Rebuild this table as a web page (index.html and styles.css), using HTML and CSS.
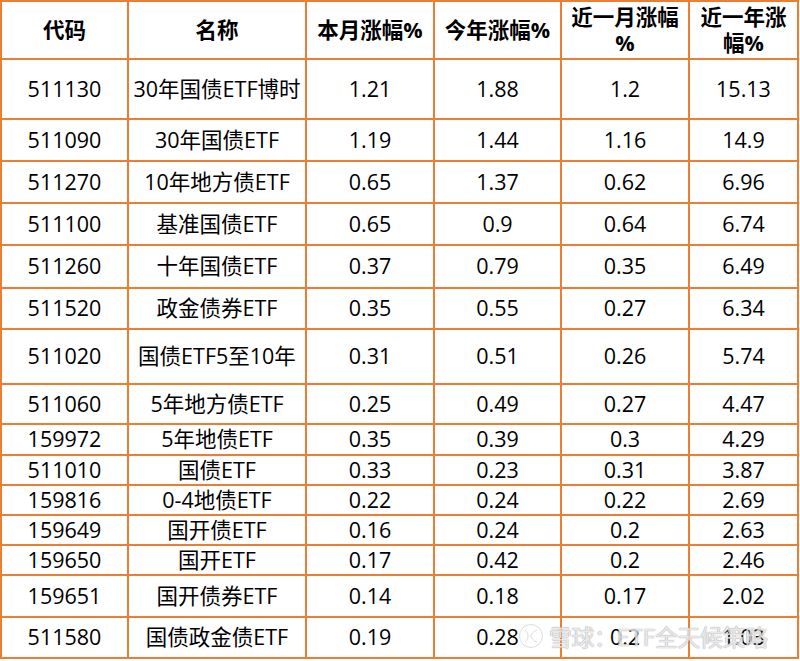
FILE: index.html
```html
<!DOCTYPE html>
<html lang="zh-CN">
<head>
<meta charset="utf-8">
<title>债券ETF涨幅</title>
<link rel="stylesheet" href="styles.css">
</head>
<body>
<div class="page">
<table class="etf">
<colgroup>
<col class="c1"><col class="c2"><col class="c3"><col class="c4"><col class="c5"><col class="c6">
</colgroup>
<thead>
<tr class="h56"><th>代码</th><th>名称</th><th>本月涨幅%</th><th>今年涨幅%</th><th>近一月涨幅<br>%</th><th>近一年涨<br>幅%</th></tr>
</thead>
<tbody>
<tr class="h58"><td>511130</td><td>30年国债ETF博时</td><td>1.21</td><td>1.88</td><td>1.2</td><td>15.13</td></tr>
<tr class="h40"><td>511090</td><td>30年国债ETF</td><td>1.19</td><td>1.44</td><td>1.16</td><td>14.9</td></tr>
<tr class="h40"><td>511270</td><td>10年地方债ETF</td><td>0.65</td><td>1.37</td><td>0.62</td><td>6.96</td></tr>
<tr class="h40"><td>511100</td><td>基准国债ETF</td><td>0.65</td><td>0.9</td><td>0.64</td><td>6.74</td></tr>
<tr class="h41"><td>511260</td><td>十年国债ETF</td><td>0.37</td><td>0.79</td><td>0.35</td><td>6.49</td></tr>
<tr class="h39"><td>511520</td><td>政金债券ETF</td><td>0.35</td><td>0.55</td><td>0.27</td><td>6.34</td></tr>
<tr class="h53"><td>511020</td><td>国债ETF5至10年</td><td>0.31</td><td>0.51</td><td>0.26</td><td>5.74</td></tr>
<tr class="h38"><td>511060</td><td>5年地方债ETF</td><td>0.25</td><td>0.49</td><td>0.27</td><td>4.47</td></tr>
<tr class="h29"><td>159972</td><td>5年地债ETF</td><td>0.35</td><td>0.39</td><td>0.3</td><td>4.29</td></tr>
<tr class="h28"><td>511010</td><td>国债ETF</td><td>0.33</td><td>0.23</td><td>0.31</td><td>3.87</td></tr>
<tr class="h28"><td>159816</td><td>0-4地债ETF</td><td>0.22</td><td>0.24</td><td>0.22</td><td>2.69</td></tr>
<tr class="h28"><td>159649</td><td>国开债ETF</td><td>0.16</td><td>0.24</td><td>0.2</td><td>2.63</td></tr>
<tr class="h28"><td>159650</td><td>国开ETF</td><td>0.17</td><td>0.42</td><td>0.2</td><td>2.46</td></tr>
<tr class="h40"><td>159651</td><td>国开债券ETF</td><td>0.14</td><td>0.18</td><td>0.17</td><td>2.02</td></tr>
<tr class="h39"><td>511580</td><td>国债政金债ETF</td><td>0.19</td><td>0.28</td><td>0.2</td><td>1.03</td></tr>
</tbody>
</table>
<div class="watermark">
<svg class="wm-logo" width="26" height="26" viewBox="0 0 26 26" aria-hidden="true">
<circle cx="13" cy="13" r="11.5" fill="none" stroke="#fff" stroke-width="2.2"/>
<circle cx="13" cy="13" r="11.5" fill="none" stroke="#bdbdbd" stroke-width="0.6"/>
<path d="M7 7 C11 10 11 16 7 19" fill="none" stroke="#fff" stroke-width="2.4" stroke-linecap="round"/>
<path d="M7 7 C11 10 11 16 7 19" fill="none" stroke="#bdbdbd" stroke-width="0.6"/>
<path d="M19 7 C14 9 12 13 13 14 C14 16 16 18 19 19" fill="none" stroke="#fff" stroke-width="2.4" stroke-linecap="round"/>
<path d="M19 7 C14 9 12 13 13 14 C14 16 16 18 19 19" fill="none" stroke="#bdbdbd" stroke-width="0.6"/>
</svg>
<span class="wm-text">雪球：ETF全天候策略</span>
</div>
</div>
</body>
</html>
```
FILE: styles.css
```css
html, body {
  margin: 0;
  padding: 0;
  background: #ffffff;
}

.page {
  position: relative;
  width: 800px;
  height: 661px;
  overflow: hidden;
}

.etf {
  table-layout: fixed;
  width: 799px;
  border-collapse: separate;
  border-spacing: 2px;
  background: #ed7d31;
  font-family: "Open Sans", "Noto Sans CJK SC", sans-serif;
  font-size: 21.5px;
  color: #000;
}

.c1 { width: 125px; }
.c2 { width: 176px; }
.c3 { width: 126px; }
.c4 { width: 125px; }
.c5 { width: 126px; }
.c6 { width: 107px; }

.etf th,
.etf td {
  background: #ffffff;
  padding: 0;
  text-align: center;
  vertical-align: middle;
  line-height: 1.25;
}

.etf th {
  font-weight: 700;
  line-height: 1.22;
  white-space: nowrap;
}

.etf td {
  font-weight: 400;
  white-space: nowrap;
}

.h56 > * { height: 56px; }
.h58 > * { height: 58px; }
.h53 > * { height: 53px; }
.h41 > * { height: 41px; }
.h40 > * { height: 40px; }
.h39 > * { height: 39px; }
.h38 > * { height: 38px; }
.h29 > * { height: 29px; }
.h28 > * { height: 28px; }

.watermark {
  position: absolute;
  left: 518px;
  top: 623px;
  display: flex;
  align-items: center;
  gap: 5px;
  pointer-events: none;
  opacity: 0.85;
}

.wm-logo {
  display: block;
}

.wm-text {
  font-family: "Noto Sans CJK SC", sans-serif;
  font-size: 23px;
  line-height: 26px;
  color: rgba(255, 255, 255, 0.75);
  text-shadow: 0 0 1px #9a9a9a, 0 0 1px #9a9a9a;
  letter-spacing: -0.5px;
}
```
